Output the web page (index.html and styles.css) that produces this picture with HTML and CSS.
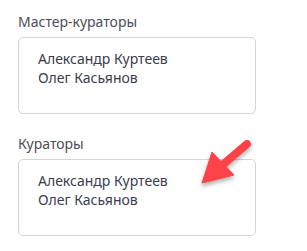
FILE: index.html
```html
<!DOCTYPE html>
<html lang="ru">
<head>
    <meta charset="UTF-8">
    <title>Кураторы</title>
    <link rel="stylesheet" href="styles.css">
</head>
<body>
    <div class="form">
        <div class="field">
            <div class="label">Мастер-кураторы</div>
            <div class="box">
                <div>Александр Куртеев</div>
                <div>Олег Касьянов</div>
            </div>
        </div>
        <div class="field">
            <div class="label">Кураторы</div>
            <div class="box">
                <div>Александр Куртеев</div>
                <div>Олег Касьянов</div>
            </div>
        </div>
    </div>
    <!-- стрелка-указатель поверх поля -->
    <svg class="arrow" width="307" height="251" viewBox="0 0 307 251">
        <line x1="247" y1="144" x2="220" y2="167" stroke="#ff4248" stroke-width="8" stroke-linecap="round"/>
        <polygon points="202,183 212,152 234,175" fill="#ff4248" stroke="#ff4248" stroke-width="1" stroke-linejoin="round"/>
    </svg>
</body>
</html>
```

FILE: styles.css
```css
body {
    margin: 0;
    background-color: #ffffff;
    font-family: "Noto Sans", "Open Sans", sans-serif;
    font-size: 14px;
    line-height: 19px;
    position: relative;
    width: 307px;
    height: 251px;
    overflow: hidden;
}

.form {
    padding: 12px 0 0 18px;
}

.field {
    margin-bottom: 20px;
}

.label {
    color: #4d4d57;
    margin-bottom: 6px;
}

.box {
    box-sizing: border-box;
    width: 238px;
    height: 77px;
    border: 1px solid #d4d4da;
    border-radius: 5px;
    padding: 11px 0 0 19px;
    color: #3b3c4e;
}

.arrow {
    position: absolute;
    left: 0;
    top: 0;
    filter: drop-shadow(0 3px 2px rgba(0, 0, 0, 0.3));
}
```
